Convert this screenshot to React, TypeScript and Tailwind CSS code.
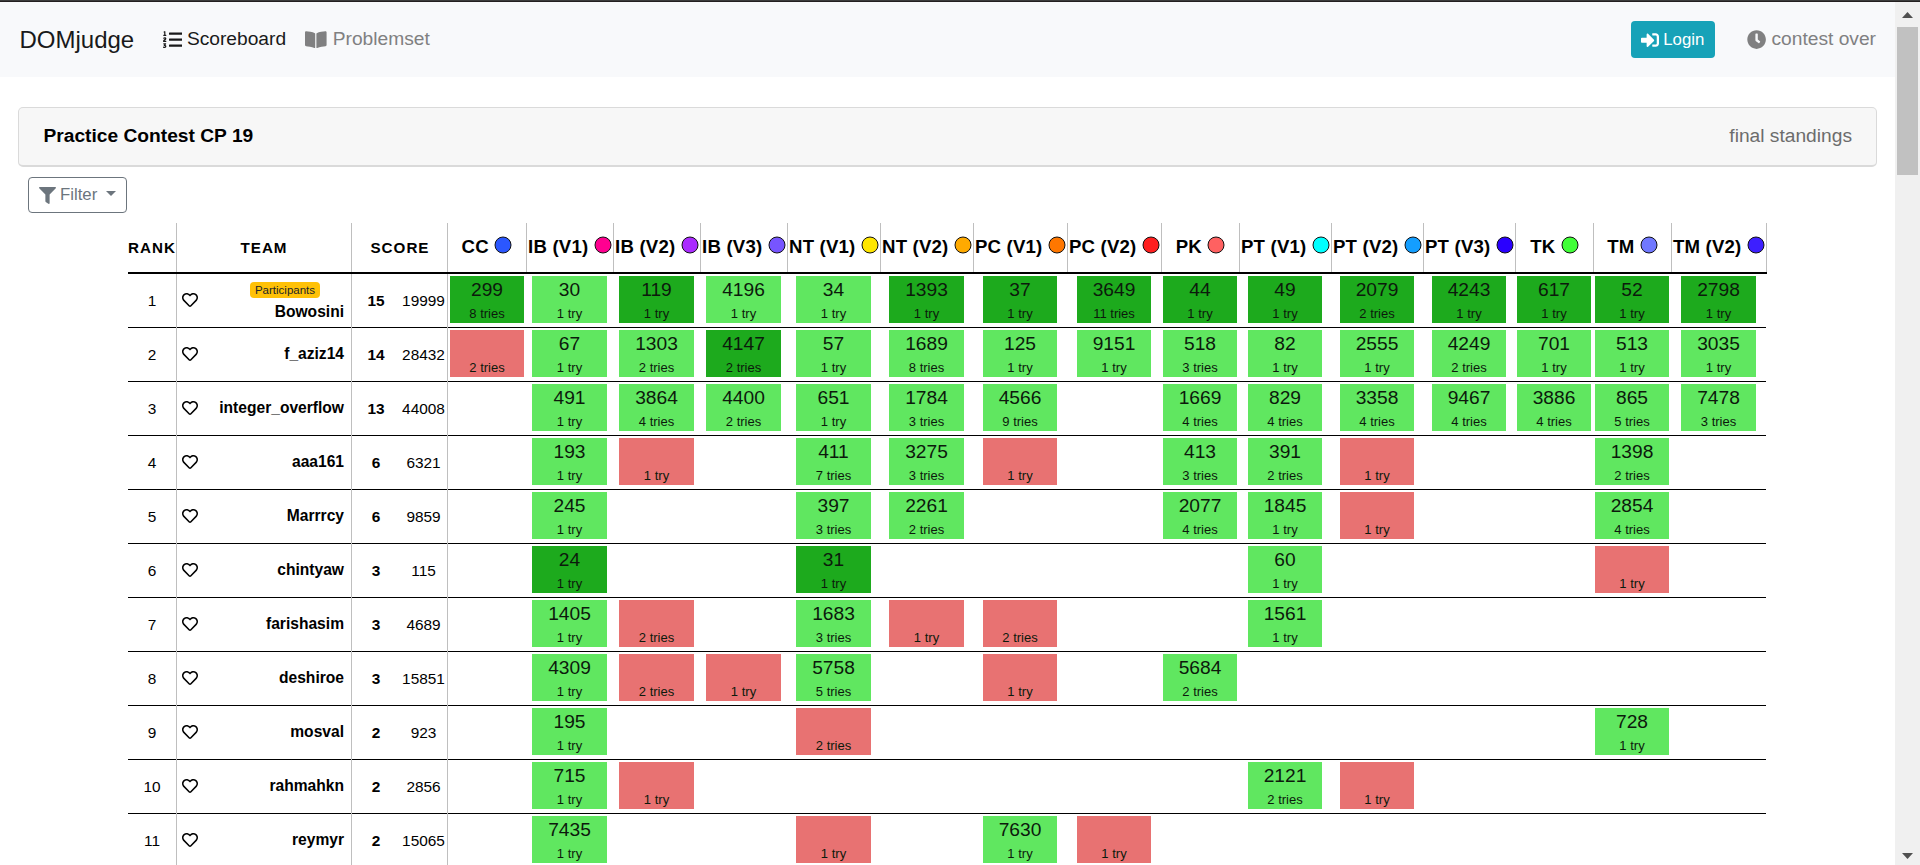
import React from "react";
import { FaBookOpen, FaClock, FaFilter, FaListOl, FaRegHeart, FaSignInAlt } from "react-icons/fa";

type Problem = { label: string; color: string; col: string; box: string };

const problems: Problem[] = [
  { label: "CC", color: "#2b57ff", col: "w-[79px]", box: "ml-[2px] w-[74px]" },
  { label: "IB (V1)", color: "#ff0090", col: "w-[87px]", box: "ml-[5px] w-[75px]" },
  { label: "IB (V2)", color: "#aa2bff", col: "w-[87px]", box: "ml-[5px] w-[75px]" },
  { label: "IB (V3)", color: "#7755ff", col: "w-[87px]", box: "ml-[5px] w-[75px]" },
  { label: "NT (V1)", color: "#ffe600", col: "w-[93px]", box: "ml-[8px] w-[75px]" },
  { label: "NT (V2)", color: "#ffaa00", col: "w-[93px]", box: "ml-[8px] w-[75px]" },
  { label: "PC (V1)", color: "#ff7700", col: "w-[94px]", box: "ml-[9px] w-[74px]" },
  { label: "PC (V2)", color: "#ff1f1f", col: "w-[94px]", box: "ml-[9px] w-[74px]" },
  { label: "PK", color: "#ff6161", col: "w-[78px]", box: "ml-[1px] w-[74px]" },
  { label: "PT (V1)", color: "#00ffff", col: "w-[92px]", box: "ml-[8px] w-[74px]" },
  { label: "PT (V2)", color: "#149eff", col: "w-[92px]", box: "ml-[8px] w-[74px]" },
  { label: "PT (V3)", color: "#2a00ff", col: "w-[92px]", box: "ml-[8px] w-[74px]" },
  { label: "TK", color: "#40ff37", col: "w-[78px]", box: "ml-[1px] w-[74px]" },
  { label: "TM", color: "#7078ff", col: "w-[78px]", box: "ml-[1px] w-[74px]" },
  { label: "TM (V2)", color: "#3d1fff", col: "w-[95px]", box: "ml-[9px] w-[75px]" },
];

type Team = { rank: number; name: string; solved: number; time: number; badge?: string; cells: string[] };

// Cell notation: "time/tries", with "*" for the first solver; "x/tries" is unsolved and "" is unattempted.
const teams: Team[] = [
  { rank: 1, name: "Bowosini", solved: 15, time: 19999, badge: "Participants", cells: ["*299/8", "30/1", "*119/1", "4196/1", "34/1", "*1393/1", "*37/1", "*3649/11", "*44/1", "*49/1", "*2079/2", "*4243/1", "*617/1", "*52/1", "*2798/1"] },
  { rank: 2, name: "f_aziz14", solved: 14, time: 28432, cells: ["x/2", "67/1", "1303/2", "*4147/2", "57/1", "1689/8", "125/1", "9151/1", "518/3", "82/1", "2555/1", "4249/2", "701/1", "513/1", "3035/1"] },
  { rank: 3, name: "integer_overflow", solved: 13, time: 44008, cells: ["", "491/1", "3864/4", "4400/2", "651/1", "1784/3", "4566/9", "", "1669/4", "829/4", "3358/4", "9467/4", "3886/4", "865/5", "7478/3"] },
  { rank: 4, name: "aaa161", solved: 6, time: 6321, cells: ["", "193/1", "x/1", "", "411/7", "3275/3", "x/1", "", "413/3", "391/2", "x/1", "", "", "1398/2", ""] },
  { rank: 5, name: "Marrrcy", solved: 6, time: 9859, cells: ["", "245/1", "", "", "397/3", "2261/2", "", "", "2077/4", "1845/1", "x/1", "", "", "2854/4", ""] },
  { rank: 6, name: "chintyaw", solved: 3, time: 115, cells: ["", "*24/1", "", "", "*31/1", "", "", "", "", "60/1", "", "", "", "x/1", ""] },
  { rank: 7, name: "farishasim", solved: 3, time: 4689, cells: ["", "1405/1", "x/2", "", "1683/3", "x/1", "x/2", "", "", "1561/1", "", "", "", "", ""] },
  { rank: 8, name: "deshiroe", solved: 3, time: 15851, cells: ["", "4309/1", "x/2", "x/1", "5758/5", "", "x/1", "", "5684/2", "", "", "", "", "", ""] },
  { rank: 9, name: "mosval", solved: 2, time: 923, cells: ["", "195/1", "", "", "x/2", "", "", "", "", "", "", "", "", "728/1", ""] },
  { rank: 10, name: "rahmahkn", solved: 2, time: 2856, cells: ["", "715/1", "x/1", "", "", "", "", "", "", "2121/2", "x/1", "", "", "", ""] },
  { rank: 11, name: "reymyr", solved: 2, time: 15065, cells: ["", "7435/1", "", "", "x/1", "", "7630/1", "x/1", "", "", "", "", "", "", ""] },
];

function ScoreCell({ value, problem }: { value: string; problem: Problem }) {
  if (!value) return <div className={`${problem.col} shrink-0 border-b border-black`} />;
  const first = value.startsWith("*");
  const [time, tries] = value.replace("*", "").split("/");
  const failed = time === "x";
  const bg = failed ? "bg-[#e87272]" : first ? "bg-[#1daa1d]" : "bg-[#60e760]";
  return (
    <div className={`${problem.col} shrink-0 border-b border-black pt-[2px]`}>
      <div className={`${problem.box} ${bg} h-[47px] text-center text-[#0c1a0c]`}>
        <div className="h-[27px] text-[19.2px] leading-[27px]">{failed ? "" : time}</div>
        <div className="h-[20px] text-[13px] leading-[21px]">{tries === "1" ? "1 try" : `${tries} tries`}</div>
      </div>
    </div>
  );
}

function TeamRow({ team }: { team: Team }) {
  return (
    <div className="flex h-[54px] text-[15.4px] leading-[21px]">
      <div className="w-[49px] shrink-0 border-r border-[#bfbfbf]">
        <div className="flex h-full items-center justify-center border-b border-black">{team.rank}</div>
      </div>
      <div className="w-[175px] shrink-0 border-r border-[#bfbfbf]">
        <div className="flex h-full items-center border-b border-black pr-[7px] pb-[2px] pl-[5px]">
          <FaRegHeart className="mt-px size-4 shrink-0" />
          <div className="flex flex-1 flex-col items-end">
            {team.badge && (
              <span className="mt-[5px] mr-6 h-4 w-[70px] rounded-[4px] bg-[#ffc107] text-center text-[11.52px] leading-4 text-[#212529]">
                {team.badge}
              </span>
            )}
            <span className={team.badge ? "mt-[3px] text-[15.6px] font-bold" : "text-[15.6px] font-bold"}>{team.name}</span>
          </div>
        </div>
      </div>
      <div className="w-[96px] shrink-0 border-r border-[#bfbfbf]">
        <div className="flex h-full items-center border-b border-black text-center">
          <div className="w-12 font-bold">{team.solved}</div>
          <div className="w-[47px]">{team.time}</div>
        </div>
      </div>
      {problems.map((p, i) => (
        <ScoreCell key={p.label} value={team.cells[i]} problem={p} />
      ))}
    </div>
  );
}

function ScoreboardHeader() {
  const side = "shrink-0 border-r border-[#bfbfbf] text-center text-[15.2px] leading-[49px] tracking-[1px]";
  return (
    <div className="flex h-[51px] border-b-2 border-black font-bold">
      <div className={`w-[49px] ${side}`}>RANK</div>
      <div className={`w-[175px] ${side}`}>TEAM</div>
      <div className={`w-[96px] pl-px ${side}`}>SCORE</div>
      {problems.map((p) => (
        <div key={p.label} className={`${p.col} flex shrink-0 justify-center border-r border-[#bfbfbf] text-[18.6px] leading-[47px] tracking-[0.2px] whitespace-nowrap`}>
          <span>{p.label}</span>
          <svg className="mt-[13px] ml-[5.5px] size-[18px] shrink-0" viewBox="0 0 18 18">
            <circle cx="9" cy="9" r="8" fill={p.color} stroke="#111" strokeWidth="1" />
          </svg>
        </div>
      ))}
    </div>
  );
}

function Navbar() {
  return (
    <nav className="flex h-[75px] items-center bg-[#f8f9fb] pr-[19px] pl-[19.5px] text-[19.2px] text-[#808081]">
      <a className="mr-[28.5px] text-[24px] leading-9 text-[#19191a]">DOMjudge</a>
      <a className="mr-[19px] flex items-center text-[#19191a]">
        <FaListOl className="mr-[5px] size-[19.2px]" />
        Scoreboard
      </a>
      <a className="flex items-center">
        <FaBookOpen className="mr-[6px] h-[19.2px] w-[21.6px]" />
        Problemset
      </a>
      <a className="ml-auto flex h-[37px] w-[84px] items-center rounded-[4px] bg-[#17a2b8] pl-[10px] text-[16.8px] text-white">
        <FaSignInAlt className="mr-1 size-[18px]" />
        Login
      </a>
      <span className="ml-[32px] flex items-center">
        <FaClock className="mr-[5px] size-[19.2px]" />
        contest over
      </span>
    </nav>
  );
}

function Scrollbar() {
  return (
    <div className="flex w-[25px] shrink-0 flex-col items-center bg-[#f0f0f0]">
      <svg className="mt-[10px] h-[6px] w-[11px]" viewBox="0 0 11 6">
        <path d="M0 6L5.5 0L11 6Z" fill="#505050" />
      </svg>
      <div className="mt-[9px] h-[148px] w-[21px] bg-[#c1c1c1]" />
      <svg className="mt-auto mb-[6px] h-[6px] w-[11px]" viewBox="0 0 11 6">
        <path d="M0 0L5.5 6L11 0Z" fill="#505050" />
      </svg>
    </div>
  );
}

export default function App() {
  return (
    <div className="flex h-[865px] w-[1920px] flex-col overflow-hidden bg-white font-['Liberation_Sans',Arial,sans-serif] text-black">
      <div className="h-[2px] shrink-0 border-b border-[#231f20] bg-[#3c3c3c]" />
      <div className="flex min-h-0 flex-1">
        <main className="min-w-0 flex-1 overflow-hidden">
          <Navbar />
          <div className="mt-[30px] mr-[18px] ml-[18px] flex h-[60px] justify-between rounded-[5px] border border-b-2 border-[#dadada] bg-[#f7f7f7] pt-[13px] pr-[24px] pl-[24.5px] text-[19.2px] leading-[29px]">
            <span className="font-bold">Practice Contest CP 19</span>
            <span className="text-[#6c6c6c]">final standings</span>
          </div>
          <button className="mt-[10px] ml-7 flex h-9 w-[99px] items-center rounded-[4px] border border-[#6c757d] pl-[9.5px] text-[16.8px] text-[#6c757d]">
            <FaFilter className="mr-[4.5px] size-[17px]" />
            Filter
            <svg className="mb-[3px] ml-[9px] h-[5px] w-[10px]" viewBox="0 0 10 5">
              <path d="M0 0H10L5 5Z" fill="#6c757d" />
            </svg>
          </button>
          <section className="mt-[10px] ml-32 w-[1639px]">
            <ScoreboardHeader />
            <div className="w-[1638px] overflow-hidden">
              {teams.map((t) => (
                <TeamRow key={t.rank} team={t} />
              ))}
            </div>
          </section>
        </main>
        <Scrollbar />
      </div>
    </div>
  );
}
